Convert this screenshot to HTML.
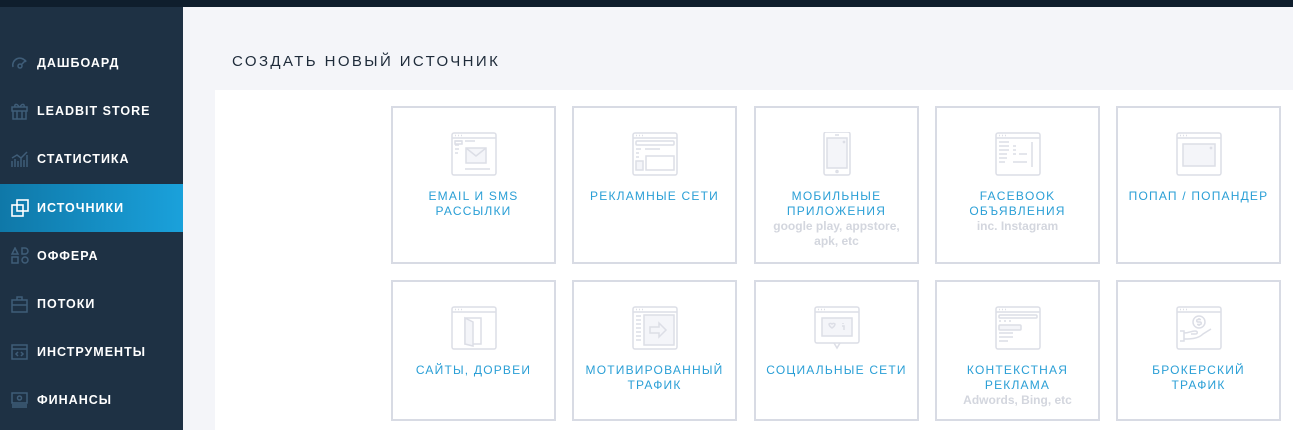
<!DOCTYPE html>
<html><head><meta charset="utf-8"><style>
*{margin:0;padding:0;box-sizing:border-box}
body{width:1293px;height:430px;overflow:hidden;background:#f4f5f9;font-family:"Liberation Sans","DejaVu Sans",sans-serif;position:relative}
.top{position:absolute;left:0;top:0;width:1293px;height:7px;background:#0f1e2d}
.side{position:absolute;left:0;top:7px;width:183px;height:423px;background:#1e3144}
.item{position:absolute;left:0;width:183px;height:48px;color:#fff;font-weight:bold;font-size:12.5px;letter-spacing:1px;line-height:48px;padding-left:37px}
.item.act{background:linear-gradient(90deg,#0f78a8,#1aa1db)}
.item svg{position:absolute;left:11px;top:15px}
.title{position:absolute;left:232px;top:53px;font-size:15px;letter-spacing:2.4px;color:#1e2b3a}
.panel{position:absolute;left:215px;top:90px;width:1078px;height:340px;background:#fff}
.card{position:absolute;width:165px;border:2px solid #d8dbe4;background:#fff;text-align:center}
.card svg{position:absolute;left:58px;top:24px}
.lbl{position:absolute;left:0;right:0;top:81px;color:#2a9fd6;font-size:12px;letter-spacing:1.2px;line-height:15px}
.sub{color:#d3d6de;font-weight:bold;font-size:12px;letter-spacing:0;line-height:15px}
</style></head><body>
<div class="top"></div>
<div class="side">
<div class="item" style="top:32px"><svg width="18" height="18" fill="none" stroke="#3f5d78" stroke-width="1.5"><path d="M2 13a7 7 0 0 1 13-5"/><circle cx="9" cy="12" r="2"/><path d="M10 11l5-5"/></svg>ДАШБОАРД</div>
<div class="item" style="top:80px"><svg width="18" height="18" fill="none" stroke="#3f5d78" stroke-width="1.5"><rect x="1" y="5" width="15" height="4"/><path d="M2 9v8h13V9M6 9v8M11 9v8M8 5c-2-4-5-3-4 0M9 5c2-4 5-3 4 0"/></svg>LEADBIT STORE</div>
<div class="item" style="top:128px"><svg width="18" height="18" fill="none" stroke="#3f5d78" stroke-width="1.5"><path d="M1 17V11M4 17V9M7 17V11M10 17V8M13 17V10M16 17V5M1 8l5-3 4 3 6-6"/></svg>СТАТИСТИКА</div>
<div class="item act" style="top:177px"><svg width="18" height="18" fill="none" stroke="#fff" stroke-width="1.6"><rect x="1" y="6" width="11" height="11"/><rect x="6" y="1" width="11" height="11"/></svg>ИСТОЧНИКИ</div>
<div class="item" style="top:225px"><svg width="18" height="18" fill="none" stroke="#3f5d78" stroke-width="1.5"><path d="M4 1l3 6H1z"/><path d="M11 1h3a3 3 0 0 1 0 6h-3z"/><rect x="1" y="10" width="6" height="6"/><circle cx="14" cy="13" r="3"/></svg>ОФФЕРА</div>
<div class="item" style="top:273px"><svg width="18" height="18" fill="none" stroke="#3f5d78" stroke-width="1.5"><rect x="1" y="5" width="15" height="12"/><path d="M6 5V2h5v3M1 10h15"/></svg>ПОТОКИ</div>
<div class="item" style="top:321px"><svg width="18" height="18" fill="none" stroke="#3f5d78" stroke-width="1.5"><rect x="1" y="2" width="15" height="14"/><path d="M1 6h15M7 9l-2 2 2 2M10 9l2 2-2 2"/></svg>ИНСТРУМЕНТЫ</div>
<div class="item" style="top:369px"><svg width="18" height="18" fill="none" stroke="#3f5d78" stroke-width="1.5"><rect x="1" y="2" width="15" height="10"/><circle cx="8.5" cy="7" r="2"/><path d="M1 14h15M1 16h15"/></svg>ФИНАНСЫ</div>
</div>
<div class="title">СОЗДАТЬ НОВЫЙ ИСТОЧНИК</div>
<div class="panel"></div>

<div class="card" style="left:391px;top:106px;height:158px"><svg width="46" height="44" fill="none" stroke="#dcdee6" stroke-width="1.5"><rect x="1" y="1" width="44" height="42" rx="2"/><path d="M1 6h44M4 3.5h1M7 3.5h1M10 3.5h1M4 9h7M14 9h10M4 13h4M4 17h4M4 21h3M14 37h25"/><rect x="4" y="9" width="7" height="3"/><rect x="15" y="16" width="20" height="15" fill="#f4f5f9"/><path d="M15 16l10 8 10-8"/></svg><div class="lbl">EMAIL И SMS<br>РАССЫЛКИ</div></div>
<div class="card" style="left:572px;top:106px;height:158px"><svg width="46" height="44" fill="none" stroke="#dcdee6" stroke-width="1.5"><rect x="1" y="1" width="44" height="42" rx="2"/><path d="M1 6h44M4 3.5h1M7 3.5h1M10 3.5h1M4 17h5M13 17h15M4 21h3M4 25h3"/><rect x="4" y="9" width="38" height="4" rx="1"/><rect x="4" y="29" width="7" height="9" fill="#f4f5f9"/><rect x="14" y="24" width="28" height="14"/></svg><div class="lbl">РЕКЛАМНЫЕ СЕТИ</div></div>
<div class="card" style="left:754px;top:106px;height:158px"><svg width="46" height="44" fill="none" stroke="#dcdee6" stroke-width="1.5"><rect x="10" y="0" width="26" height="43" rx="2"/><rect x="13" y="6" width="20" height="30" fill="#f4f5f9"/><path d="M21 3h4M29 9l2 2M31 9l-2 2"/><circle cx="23" cy="39.5" r="1"/></svg><div class="lbl">МОБИЛЬНЫЕ<br>ПРИЛОЖЕНИЯ<div class="sub">google play, appstore,<br>apk, etc</div></div></div>
<div class="card" style="left:935px;top:106px;height:158px"><svg width="46" height="44" fill="none" stroke="#dcdee6" stroke-width="1.5"><rect x="1" y="1" width="44" height="42" rx="2"/><path d="M1 6h44M4 3.5h1M7 3.5h1M10 3.5h1M4 10h10M4 14h10M4 18h10M4 22h8M4 26h8M4 30h6M18 14h3M18 18h3M18 22h3M24 22h8M18 30h14M37 10v25"/></svg><div class="lbl">FACEBOOK<br>ОБЪЯВЛЕНИЯ<div class="sub">inc. Instagram</div></div></div>
<div class="card" style="left:1116px;top:106px;height:158px"><svg width="46" height="44" fill="none" stroke="#dcdee6" stroke-width="1.5"><rect x="1" y="1" width="44" height="42" rx="2"/><path d="M1 6h44M4 3.5h1M7 3.5h1M10 3.5h1"/><rect x="7" y="12" width="32" height="22" fill="#f4f5f9"/><path d="M34 15l2 2M36 15l-2 2"/></svg><div class="lbl">ПОПАП / ПОПАНДЕР</div></div>

<div class="card" style="left:391px;top:280px;height:141px"><svg width="46" height="44" fill="none" stroke="#dcdee6" stroke-width="1.5"><rect x="1" y="1" width="44" height="42" rx="2"/><path d="M1 6h44M4 3.5h1M7 3.5h1M10 3.5h1"/><rect x="14" y="12" width="16" height="26"/><path d="M14 12l8 4v24l-8-2z" fill="#f4f5f9"/></svg><div class="lbl">САЙТЫ, ДОРВЕИ</div></div>
<div class="card" style="left:572px;top:280px;height:141px"><svg width="46" height="44" fill="none" stroke="#dcdee6" stroke-width="1.5"><rect x="1" y="1" width="44" height="42" rx="2"/><path d="M1 6h44M4 3.5h1M7 3.5h1M10 3.5h1M4 10h5M4 14h5M4 18h5M4 22h5M4 26h5M4 30h5M4 34h5"/><rect x="12" y="9" width="30" height="30" fill="#f4f5f9"/><path d="M18 21h9v-4l7 7-7 7v-4h-9z"/></svg><div class="lbl">МОТИВИРОВАННЫЙ<br>ТРАФИК</div></div>
<div class="card" style="left:754px;top:280px;height:141px"><svg width="46" height="44" fill="none" stroke="#dcdee6" stroke-width="1.5"><rect x="1" y="1" width="44" height="36" rx="2"/><path d="M1 6h44M4 3.5h1M7 3.5h1M10 3.5h1M20 37l3 5 3-5"/><rect x="8" y="12" width="30" height="18" fill="#f4f5f9"/><path d="M15 18a2 2 0 0 1 3 0 2 2 0 0 1 3 0c0 2-3 4-3 4s-3-2-3-4zM29 17v1M28 20h2v4"/></svg><div class="lbl">СОЦИАЛЬНЫЕ СЕТИ</div></div>
<div class="card" style="left:935px;top:280px;height:141px"><svg width="46" height="44" fill="none" stroke="#dcdee6" stroke-width="1.5"><rect x="1" y="1" width="44" height="42" rx="2"/><path d="M1 6h44M4 3.5h1M7 3.5h1M10 3.5h1M4 15h2M9 15h2M14 15h2M4 27h14M4 31h14M4 35h9"/><rect x="4" y="9" width="38" height="3" rx="1"/><rect x="4" y="19" width="22" height="5" rx="1" fill="#f4f5f9"/></svg><div class="lbl">КОНТЕКСТНАЯ<br>РЕКЛАМА<div class="sub">Adwords, Bing, etc</div></div></div>
<div class="card" style="left:1116px;top:280px;height:141px"><svg width="46" height="44" fill="none" stroke="#dcdee6" stroke-width="1.5"><rect x="1" y="1" width="44" height="42" rx="2"/><path d="M1 6h44M4 3.5h1M7 3.5h1M10 3.5h1"/><circle cx="23" cy="16" r="6"/><path d="M25 13.5h-3a1.2 1.2 0 0 0 0 2.5h2a1.2 1.2 0 0 1 0 2.5h-3M23 12v1.5M23 18.5v1.5M4 25h4v10H4M8 27c5 0 7-2 11-2 3 0 3 3 0 3h-4M8 33c6 0 14 0 19-5l8-5"/></svg><div class="lbl">БРОКЕРСКИЙ<br>ТРАФИК</div></div>
</body></html>
